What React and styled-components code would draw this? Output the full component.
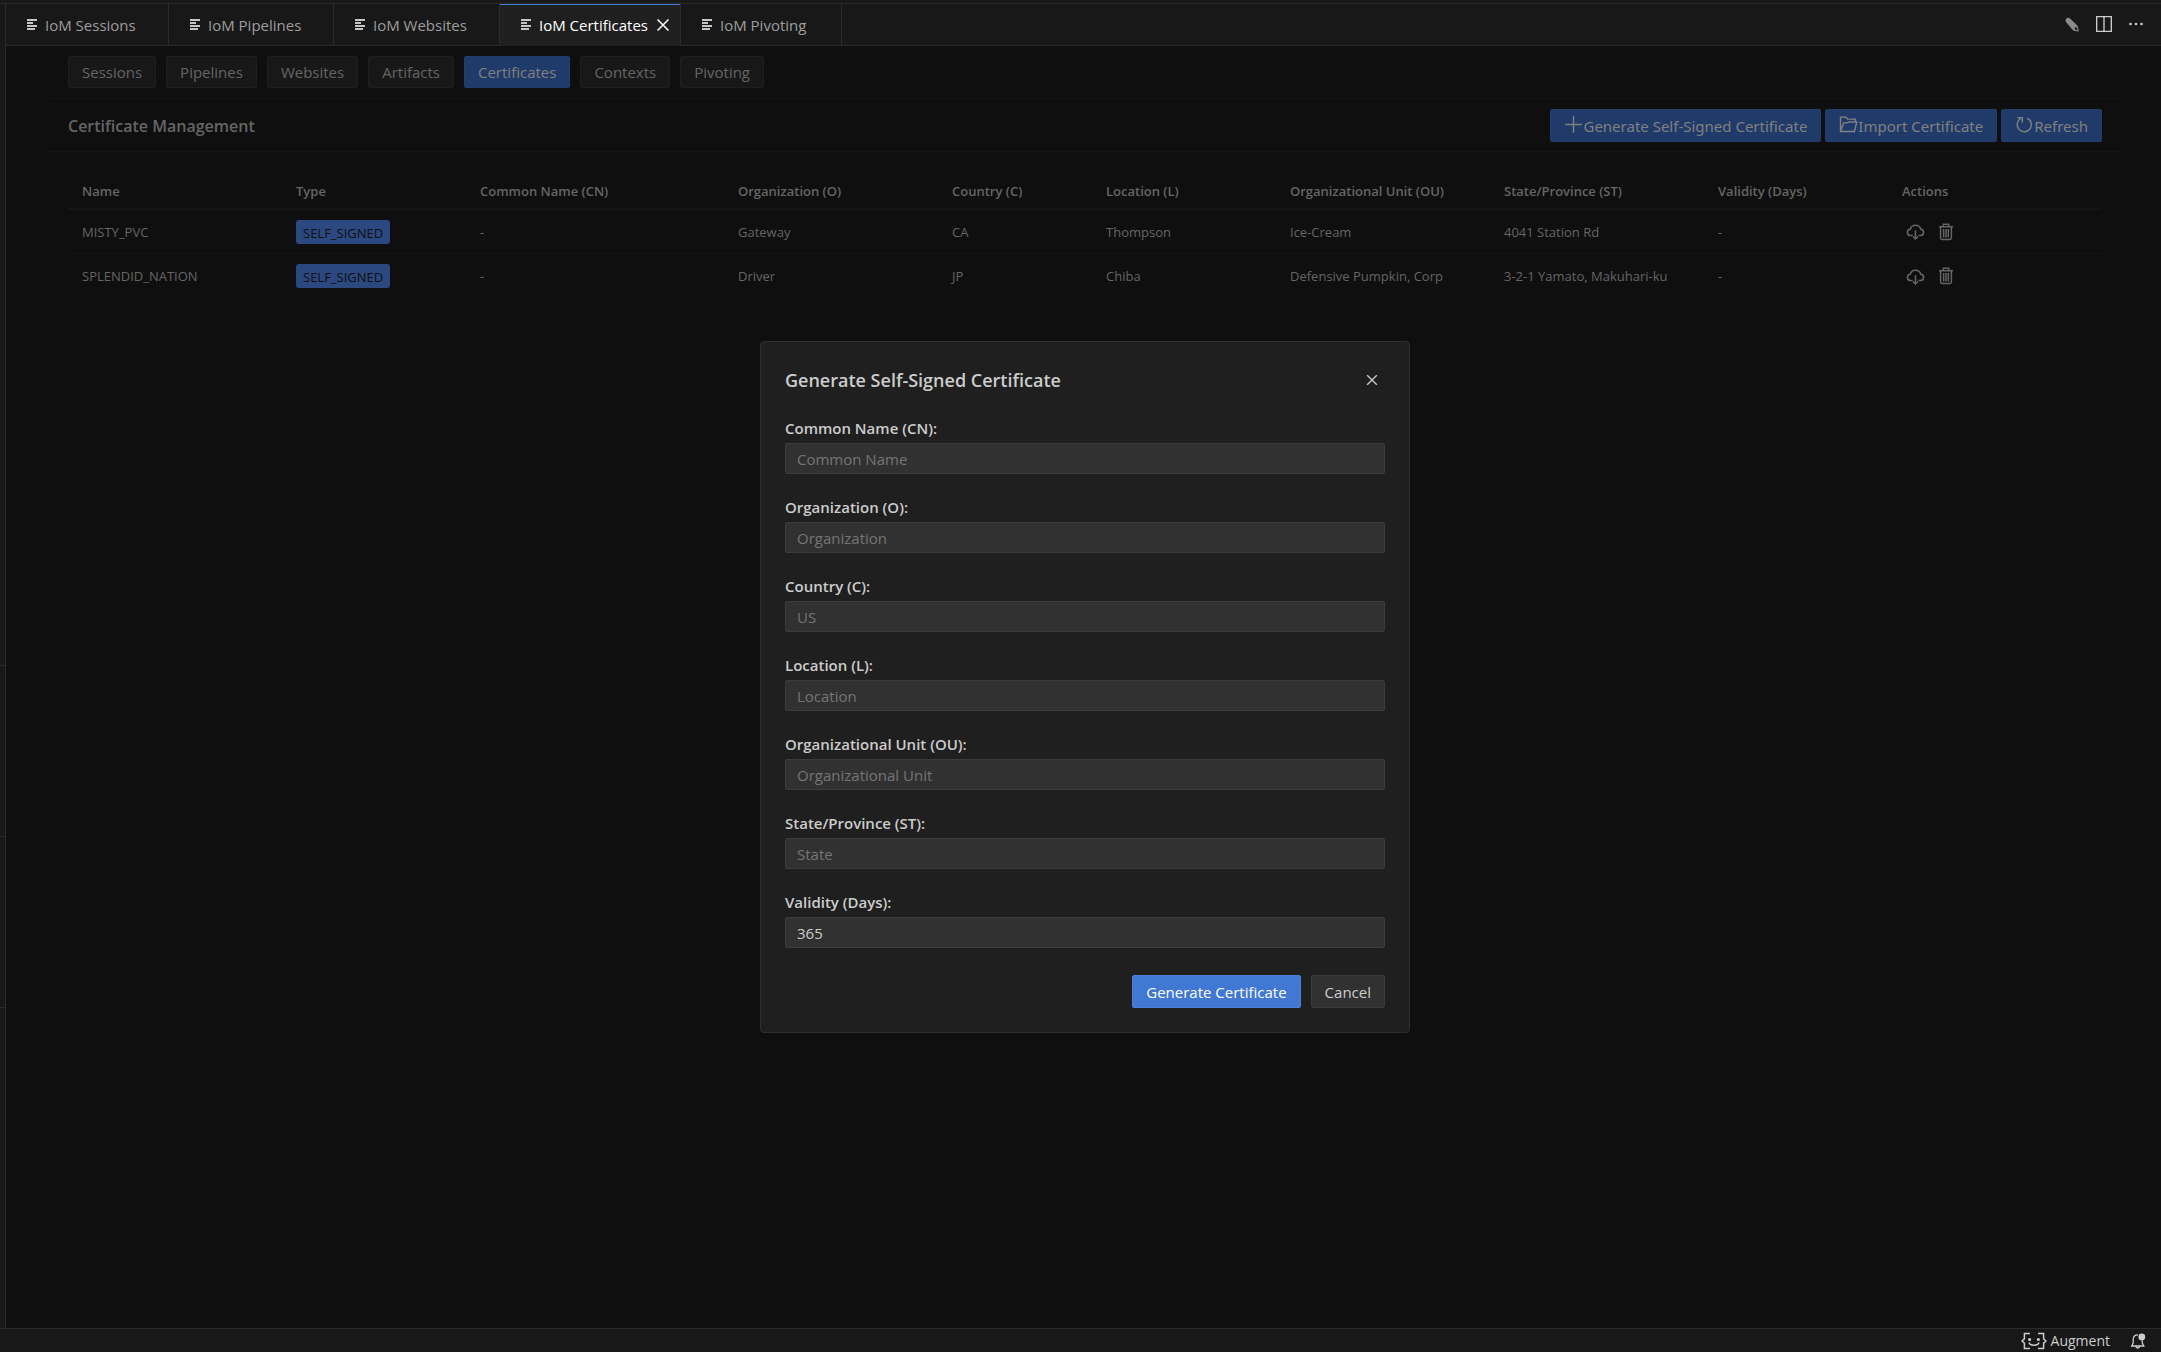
import React from "react";
import styled, { createGlobalStyle, css } from "styled-components";

const GlobalStyle = createGlobalStyle`
  *, *::before, *::after { box-sizing: border-box; }
  body { margin: 0; background: #181818; }
  button, input { font: inherit; color: inherit; }
  h1, h2 { margin: 0; }
`;

const Shell = styled.div`
  display: grid;
  grid-template-columns: 6px minmax(0, 1fr);
  grid-template-rows: 4px minmax(0, 1fr) 24px;
  height: 100vh;
  background: #181818;
  color: #cccccc;
  font-family: "Open Sans", "Noto Sans", sans-serif;
  font-size: 15px;
  line-height: 20px;
`;

const TopEdge = styled.div`
  grid-column: 1 / -1;
  border-bottom: 1px solid #2b2b2b;
`;

const SideEdge = styled.div`
  display: flex;
  flex-direction: column;
  justify-content: flex-end;
  padding-bottom: 150px;
  border-right: 1px solid #2b2b2b;
`;

const SideSection = styled.div`
  height: 171px;
  border-top: 1px solid #2b2b2b;
`;

const Editor = styled.div`
  display: flex;
  flex-direction: column;
  min-width: 0;
`;

const TabBar = styled.div`
  display: flex;
  height: 42px;
  background: linear-gradient(#2b2b2b, #2b2b2b) bottom / 100% 1px no-repeat;
`;

const Tab = styled.button`
  display: flex;
  align-items: center;
  gap: 7px;
  width: ${(p) => p.$width}px;
  padding: 0 0 1px 21px;
  border: 0;
  border-right: 1px solid #2b2b2b;
  background: none;
  color: #9d9d9d;
  ${(p) =>
    p.$active &&
    css`
      background: #1f1f1f;
      color: #ffffff;
      box-shadow: inset 0 1px #4078d4;
    `}
`;

const EditorActions = styled.div`
  display: flex;
  align-items: center;
  gap: 8px;
  margin-left: auto;
  padding: 0 13px 2px 0;
`;

const IconButton = styled.button`
  display: inline-flex;
  align-items: center;
  justify-content: center;
  min-width: 24px;
  height: 24px;
  padding: 0;
  border: 0;
  background: none;
  color: ${(p) => p.$color || "inherit"};
`;

const Panel = styled.main`
  position: relative;
  flex: 1;
  padding: 0 40px 0 43px;
  background: #0f0f0f;
  color: #656565;
`;

const Nav = styled.nav`
  display: flex;
  gap: 10px;
  padding: 10px 19px;
  border-bottom: 1px solid #151515;
`;

const NavButton = styled.button`
  height: 32px;
  padding: 0 13px;
  border: 1px solid ${(p) => (p.$active ? "#223e6d" : "#1f1f1f")};
  border-radius: 2px;
  background: ${(p) => (p.$active ? "#203b69" : "#181818")};
  color: ${(p) => (p.$active ? "#808080" : "#656565")};
`;

const Header = styled.header`
  display: flex;
  align-items: center;
  justify-content: space-between;
  height: 53px;
  padding: 0 19px;
  border-bottom: 1px solid #151515;
`;

const Title = styled.h1`
  padding-top: 2px;
  font-size: 16px;
  font-weight: 600;
`;

const HeaderActions = styled.div`
  display: flex;
  gap: 4px;
`;

const PrimaryAction = styled.button`
  display: flex;
  align-items: center;
  height: 33px;
  padding: 1px 13px 0;
  border: 1px solid #223e6d;
  border-radius: 2px;
  background: #203b69;
  color: #808080;
  font-family: "Noto Sans", sans-serif;

  svg {
    margin-bottom: 3px;
  }
`;

const TableArea = styled.section`
  padding: 20px 19px;
`;

const Table = styled.table`
  width: 100%;
  table-layout: fixed;
  border-collapse: separate;
  border-spacing: 0;
  font-size: 13px;
  text-align: left;
`;

const HeadCell = styled.th`
  height: 38px;
  padding: 2px 14px 0;
  border-bottom: 2px solid #151515;
  font-weight: 600;
`;

const Cell = styled.td`
  height: 44px;
  padding: 0 14px;
  border-bottom: ${(p) => (p.$last ? "0" : "1px solid #151515")};
`;

const Badge = styled.span`
  display: block;
  width: fit-content;
  height: 24px;
  padding: 0 7px;
  border-radius: 3px;
  background: #2c4880;
  color: #0f0f0f;
  line-height: 26px;
`;

const RowActions = styled.div`
  display: flex;
  gap: 7px;
  padding: 0 1px;
`;

const Overlay = styled.div`
  position: absolute;
  inset: 0;
  display: flex;
  align-items: center;
  justify-content: center;
  padding-left: 3px;
`;

const Dialog = styled.form`
  width: 650px;
  padding: 24px;
  border: 1px solid #2e2e2e;
  border-radius: 4px;
  background: #1f1f1f;
  color: #cccccc;
`;

const DialogHeader = styled.div`
  display: flex;
  align-items: center;
  justify-content: space-between;
  height: 28px;
  margin-bottom: 24px;
  padding-right: 1px;
`;

const DialogTitle = styled.h2`
  font-size: 18px;
  font-weight: 600;
`;

const Field = styled.div`
  display: flex;
  flex-direction: column;
  gap: 4px;
  margin-bottom: 23px;
`;

const Label = styled.label`
  line-height: 21px;
  font-weight: 600;
`;

const Input = styled.input`
  width: 100%;
  height: 31px;
  padding: 0 11px;
  border: 1px solid #3c3c3c;
  border-radius: 2px;
  outline: 0;
  background: #313131;
  &::placeholder {
    color: #757575;
    opacity: 1;
  }
`;

const DialogFooter = styled.div`
  display: flex;
  justify-content: flex-end;
  gap: 10px;
  padding-top: 4px;
`;

const DialogButton = styled.button`
  height: 33px;
  padding: 0 13px;
  border: 1px solid ${(p) => (p.$primary ? "#4d80d6" : "#3c3c3c")};
  border-radius: 2px;
  background: ${(p) => (p.$primary ? "#4078d4" : "#313131")};
  color: ${(p) => (p.$primary ? "#ffffff" : "#cccccc")};
`;

const StatusBar = styled.footer`
  grid-column: 1 / -1;
  display: flex;
  align-items: center;
  justify-content: flex-end;
  gap: 20px;
  padding: 1px 15px 0 0;
  border-top: 1px solid #2b2b2b;
  font-size: 14px;
`;

const StatusItem = styled.button`
  display: flex;
  align-items: center;
  gap: 4px;
  padding: 0;
  border: 0;
  background: none;
`;

const Svg = ({ size = 16, width, children, ...rest }) => (
  <svg width={width || size} height={size} viewBox="0 0 16 16" fill="none" stroke="currentColor" aria-hidden="true" {...rest}>
    {children}
  </svg>
);

const ListIcon = () => (
  <svg width="11" height="12" viewBox="0 0 11 12" fill="#c5c5c5" aria-hidden="true">
    <path d="M0 0h10v2H0zM0 3h6v2H0zM0 6h10v2H0zM0 9h8v2H0z" />
  </svg>
);
const CloseIcon = ({ size }) => (
  <Svg size={size} strokeWidth="1.5"><path d="M2.500 2.500l11 11M13.500 2.500l-11 11" /></Svg>
);
const PencilIcon = () => (
  <Svg size={16} fill="currentColor" stroke="none">
    <path d="M1.800 3.200C2.800 1.500 4.600 1.200 6 2.600l6.600 6.200c1 1 1.400 2 1.700 3.400l.5 2.600c.1.600-.2.900-.8.800l-2.700-.5c-1.300-.3-2.300-.8-3.200-1.900L2.400 6.400c-.8-1-1.100-2.200-.6-3.200zM11.300 11.200l-.7 2 2.900 1.300-.6-2.900z" fillRule="evenodd" />
  </Svg>
);
const SplitIcon = () => (
  <Svg size={18} strokeWidth="1.200"><path d="M1.500 1.500h13v13h-13zM8 1.500v13" /></Svg>
);
const MoreIcon = () => (
  <Svg size={16} fill="currentColor" stroke="none">
    <circle cx="2.500" cy="8" r="1.300" /><circle cx="8" cy="8" r="1.300" /><circle cx="13.500" cy="8" r="1.300" />
  </Svg>
);
const PlusIcon = () => <Svg size={19} strokeWidth="1.200"><path d="M8 1v14M1 8h14" /></Svg>;
const FolderIcon = () => (
  <Svg size={19} strokeWidth="1.200"><path d="M1.300 13.900V1.800h4.400l1.600 1.700h6.500v2.600M1.300 13.900L4 6.600h3l1.200-.7H15l-2 8z" /></Svg>
);
const RefreshIcon = () => (
  <Svg size={19} strokeWidth="1.200"><path d="M10.200 2.600a6 6 0 1 1-5.400.3M1.800 2.200h4.400v4.200" /></Svg>
);
const CloudIcon = () => (
  <Svg size={19} strokeWidth="1.300">
    <path d="M5.600 11.300H4a2.600 2.600 0 0 1-.4-5.200 4.500 4.200 0 0 1 8.800 0 2.600 2.600 0 0 1-.4 5.200h-1.600M8 7v7M5.900 12.200L8 14.300l2.100-2.100" />
  </Svg>
);
const TrashIcon = () => (
  <Svg size={18} strokeWidth="1.300">
    <path d="M1.800 3.300h12.400M5.600 3.300V1.200h4.800v2.100M3.200 3.600v9.600c0 .9.500 1.400 1.400 1.400h6.800c.9 0 1.400-.5 1.400-1.400V3.600M5.900 5.400v7.400M8 5.400v7.400M10.100 5.400v7.400" />
  </Svg>
);
const AugmentIcon = () => (
  <svg width="26" height="18" viewBox="0 0 26 18" fill="none" stroke="currentColor" strokeWidth="1.500" aria-hidden="true">
    <path d="M9 1.500H3.400v5.300L1 9l2.400 2.200v5.300H9M17 1.500h5.600v5.300L25 9l-2.400 2.200v5.300H17M8 10.500c1.200 3.600 8.800 3.600 10 0" />
    <circle cx="8.600" cy="7.500" r="1.600" fill="currentColor" stroke="none" />
    <circle cx="17.400" cy="7.500" r="1.600" fill="currentColor" stroke="none" />
  </svg>
);
const BellIcon = () => (
  <svg width="16" height="17" viewBox="0 0 16 17" fill="none" stroke="currentColor" strokeWidth="1.300" aria-hidden="true">
    <path d="M8 1.800C4.800 1.800 3.200 4 3.200 6.600V10L1.700 13h12.100L12.300 10V7.500M5.800 13.200c.3 2.400 3.600 2.400 3.900 0" />
    <circle cx="11.800" cy="4" r="3.400" fill="currentColor" stroke="none" />
  </svg>
);

const tabs = [
  ["IoM Sessions", 163],
  ["IoM Pipelines", 165],
  ["IoM Websites", 166],
  ["IoM Certificates", 181],
  ["IoM Pivoting", 161],
];
const sections = ["Sessions", "Pipelines", "Websites", "Artifacts", "Certificates", "Contexts", "Pivoting"];

const columns = [
  ["Name", 214],
  ["Type", 184],
  ["Common Name (CN)", 258],
  ["Organization (O)", 214],
  ["Country (C)", 154],
  ["Location (L)", 184],
  ["Organizational Unit (OU)", 214],
  ["State/Province (ST)", 214],
  ["Validity (Days)", 184],
  ["Actions", 214],
];
const rows = [
  ["MISTY_PVC", "SELF_SIGNED", "-", "Gateway", "CA", "Thompson", "Ice-Cream", "4041 Station Rd", "-"],
  ["SPLENDID_NATION", "SELF_SIGNED", "-", "Driver", "JP", "Chiba", "Defensive Pumpkin, Corp", "3-2-1 Yamato, Makuhari-ku", "-"],
];

const fields = [
  { id: "cn", label: "Common Name (CN):", placeholder: "Common Name" },
  { id: "o", label: "Organization (O):", placeholder: "Organization" },
  { id: "c", label: "Country (C):", placeholder: "US" },
  { id: "l", label: "Location (L):", placeholder: "Location" },
  { id: "ou", label: "Organizational Unit (OU):", placeholder: "Organizational Unit" },
  { id: "st", label: "State/Province (ST):", placeholder: "State" },
  { id: "days", label: "Validity (Days):", value: "365" },
];

export default function App() {
  return (
    <>
      <GlobalStyle />
      <Shell>
        <TopEdge />
        <SideEdge>
          <SideSection />
          <SideSection />
          <SideSection />
        </SideEdge>
        <Editor>
          <TabBar>
            {tabs.map(([name, width]) => {
              const active = name === "IoM Certificates";
              return (
                <Tab key={name} $width={width} $active={active}>
                  <ListIcon />
                  {name}
                  {active && <CloseIcon size={16} />}
                </Tab>
              );
            })}
            <EditorActions>
              <IconButton $color="#8a8a8a" aria-label="Edit"><PencilIcon /></IconButton>
              <IconButton aria-label="Split editor"><SplitIcon /></IconButton>
              <IconButton aria-label="More actions"><MoreIcon /></IconButton>
            </EditorActions>
          </TabBar>
          <Panel>
            <Nav>
              {sections.map((name) => (
                <NavButton key={name} $active={name === "Certificates"}>{name}</NavButton>
              ))}
            </Nav>
            <Header>
              <Title>Certificate Management</Title>
              <HeaderActions>
                <PrimaryAction><PlusIcon />Generate Self-Signed Certificate</PrimaryAction>
                <PrimaryAction><FolderIcon />Import Certificate</PrimaryAction>
                <PrimaryAction><RefreshIcon />Refresh</PrimaryAction>
              </HeaderActions>
            </Header>
            <TableArea>
              <Table>
                <colgroup>
                  {columns.map(([name, width]) => <col key={name} width={width} />)}
                </colgroup>
                <thead>
                  <tr>{columns.map(([name]) => <HeadCell key={name}>{name}</HeadCell>)}</tr>
                </thead>
                <tbody>
                  {rows.map((row, r) => {
                    const last = r === rows.length - 1;
                    return (
                      <tr key={row[0]}>
                        {row.map((value, c) => (
                          <Cell key={c} $last={last}>{c === 1 ? <Badge>{value}</Badge> : value}</Cell>
                        ))}
                        <Cell $last={last}>
                          <RowActions>
                            <IconButton aria-label={`Download ${row[0]}`}><CloudIcon /></IconButton>
                            <IconButton aria-label={`Delete ${row[0]}`}><TrashIcon /></IconButton>
                          </RowActions>
                        </Cell>
                      </tr>
                    );
                  })}
                </tbody>
              </Table>
            </TableArea>
            <Overlay>
              <Dialog onSubmit={(e) => e.preventDefault()}>
                <DialogHeader>
                  <DialogTitle>Generate Self-Signed Certificate</DialogTitle>
                  <IconButton type="button" aria-label="Close"><CloseIcon size={14} /></IconButton>
                </DialogHeader>
                {fields.map((f) => (
                  <Field key={f.id}>
                    <Label htmlFor={f.id}>{f.label}</Label>
                    <Input id={f.id} placeholder={f.placeholder} defaultValue={f.value} />
                  </Field>
                ))}
                <DialogFooter>
                  <DialogButton type="submit" $primary>Generate Certificate</DialogButton>
                  <DialogButton type="button">Cancel</DialogButton>
                </DialogFooter>
              </Dialog>
            </Overlay>
          </Panel>
        </Editor>
        <StatusBar>
          <StatusItem><AugmentIcon />Augment</StatusItem>
          <StatusItem aria-label="Notifications"><BellIcon /></StatusItem>
        </StatusBar>
      </Shell>
    </>
  );
}
